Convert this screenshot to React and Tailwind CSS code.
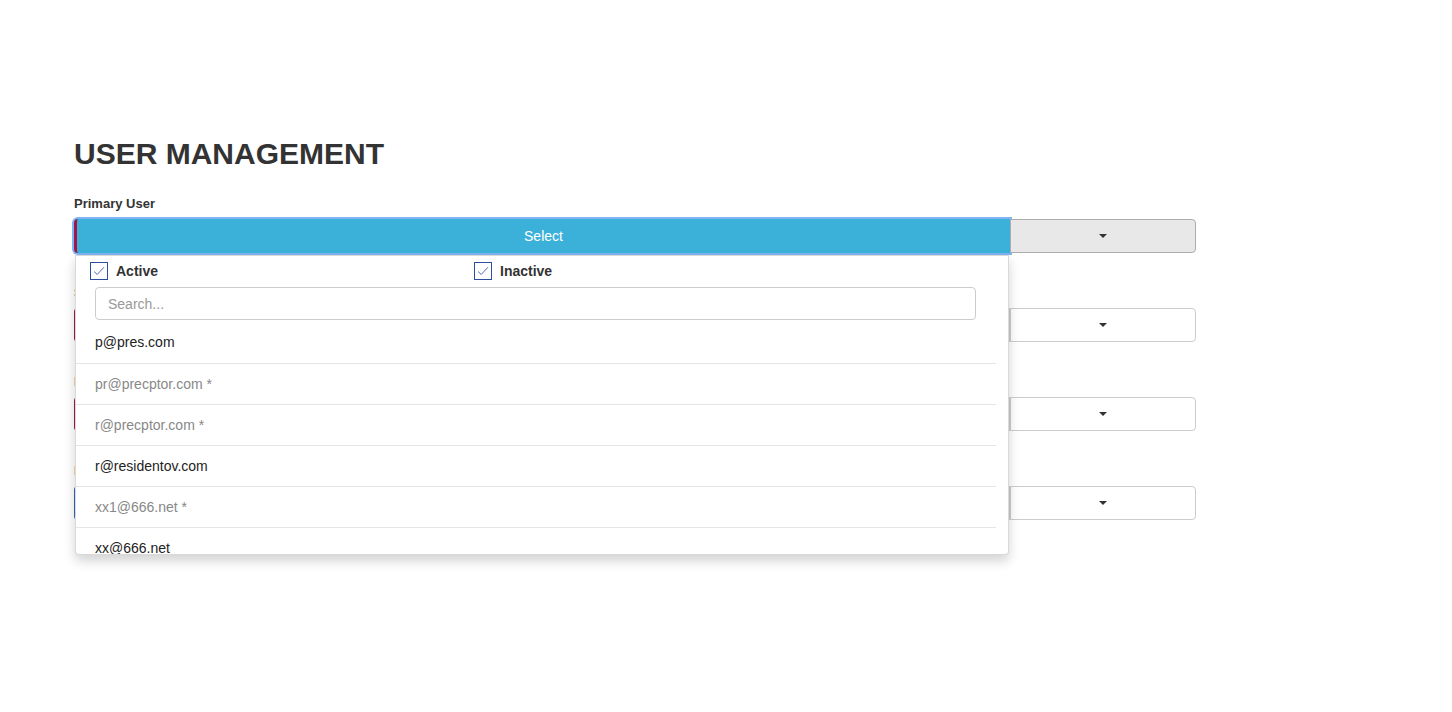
import React from 'react';

const users = [
  { email: 'p@pres.com', active: true },
  { email: 'pr@precptor.com', active: false },
  { email: 'r@precptor.com', active: false },
  { email: 'r@residentov.com', active: true },
  { email: 'xx1@666.net', active: false },
  { email: 'xx@666.net', active: true },
];

const Caret = () => (
  <span className="inline-block w-0 h-0 border-l-[4px] border-r-[4px] border-t-[4px] border-l-transparent border-r-transparent border-t-[#333]" />
);

const Checkbox = ({ label }) => (
  <label className="flex items-center">
    <span className="w-[18px] h-[18px] border border-[#2b4f9f] flex items-center justify-center bg-white">
      <svg width="12" height="10" viewBox="0 0 12 10">
        <path d="M1 5.5 L4.2 8.5 L11 1.2" fill="none" stroke="#4a6fb8" strokeWidth="1" />
      </svg>
    </span>
    <span className="ml-[8px] font-bold text-[14px] text-[#333]">{label}</span>
  </label>
);

// fila de usuario con botón dividido
const UserRow = ({ label, edge, open }) => (
  <div className="mb-[31px]">
    <div className="text-[13px] font-bold text-[#333] leading-[18px] mb-[6px]">{label}</div>
    <div className="flex w-[1122px] h-[34px]">
      {open ? (
        <button className="w-[936px] h-[34px] bg-[#3bb1d9] text-white text-[14px] border-l-[3px] border-[#a3154a] rounded-l-[4px] shadow-[0_0_0_2px_rgba(82,155,236,0.75)]">
          Select
        </button>
      ) : (
        <button className={`w-[936px] h-[34px] bg-white text-[#333] text-[14px] border border-[#ccc] border-l-[3px] rounded-l-[4px] ${edge}`}>
          Select
        </button>
      )}
      <button
        className={`flex-1 h-[34px] flex items-center justify-center rounded-r-[4px] border ${
          open ? 'bg-[#e8e8e8] border-[#adadad]' : 'bg-white border-[#ccc]'
        }`}
      >
        <Caret />
      </button>
    </div>
  </div>
);

const App = () => {
  return (
    <div className="min-h-screen bg-white pl-[74px] pt-[136px]" style={{ fontFamily: '"Liberation Sans", Arial, sans-serif' }}>
      <h1 className="text-[30px] font-bold text-[#333] leading-[36px] mb-[23px]">USER MANAGEMENT</h1>

      <div className="relative">
        <UserRow label="Primary User" open />
        <UserRow label="Secondary User" edge="border-l-[#a3154a]" />
        <UserRow label="Preceptor" edge="border-l-[#a3154a]" />
        <UserRow label="Resident" edge="border-l-[#3367b8]" />

        {/* Menú desplegable */}
        <div className="absolute left-[1px] top-[60px] w-[934px] h-[300px] bg-white border border-[rgba(0,0,0,0.15)] rounded-b-[4px] shadow-[0_6px_12px_rgba(0,0,0,0.175)] overflow-hidden">
          <div className="flex items-center pl-[14px] pt-[2px] h-[26px] box-content">
            <div className="w-[384px]">
              <Checkbox label="Active" />
            </div>
            <Checkbox label="Inactive" />
          </div>
          <div className="pl-[19px] pr-[32px] mt-[3px]">
            <input
              placeholder="Search..."
              className="w-full h-[33px] border border-[#ccc] rounded-[4px] px-[12px] text-[14px] text-[#555] placeholder:text-[#999] outline-none"
            />
          </div>
          <ul className="mt-[2px] mr-[12px]">
            {users.map((u, i) => (
              <li
                key={u.email}
                className={`h-[41px] flex items-center pl-[19px] text-[14px] ${i > 0 ? 'border-t border-[#e5e5e5]' : ''} ${
                  u.active ? 'text-[#222]' : 'text-[#888]'
                }`}
              >
                {u.active ? u.email : `${u.email} *`}
              </li>
            ))}
          </ul>
        </div>
      </div>
    </div>
  );
};

export default App;
